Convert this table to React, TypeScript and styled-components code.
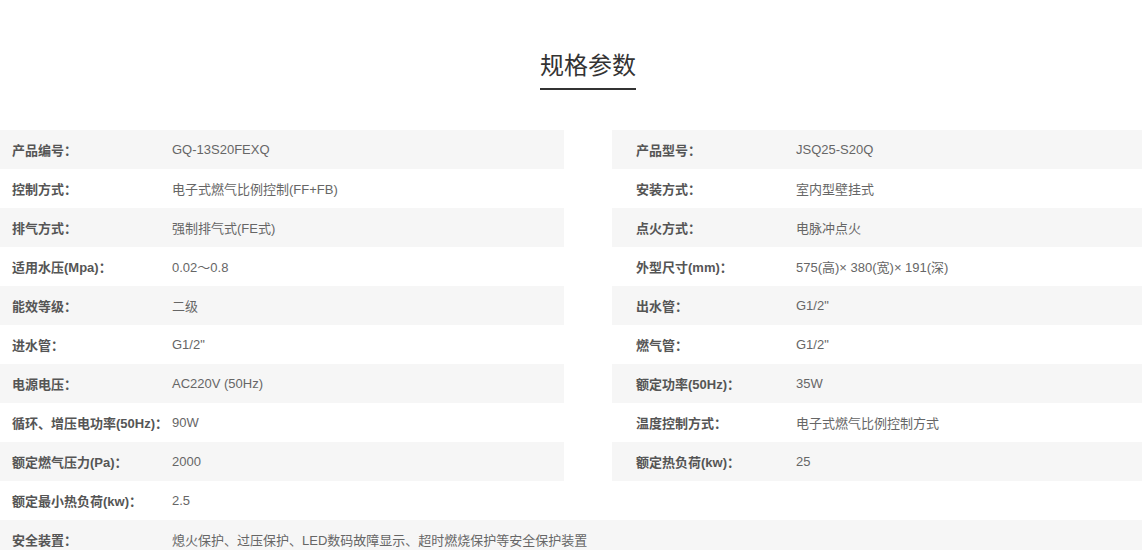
import React from "react";
import styled, { createGlobalStyle } from "styled-components";

const Global = createGlobalStyle`
  html, body { margin: 0; padding: 0; overflow: hidden; background: #fff; }
  body { font-family: "Liberation Sans", "Noto Sans CJK SC", sans-serif; }
`;

const Page = styled.div`
  width: 100%;
  padding-top: 46px;
`;

const TitleWrap = styled.div`
  display: flex;
  justify-content: center;
  padding-left: 34px;
  margin-bottom: 40px;
`;

const Title = styled.h2`
  margin: 0;
  font-family: "Noto Sans CJK SC", sans-serif;
  font-weight: 400;
  font-size: 24px;
  line-height: 36px;
  color: #333;
  padding-bottom: 6px;
  border-bottom: 2px solid #333;
`;

const Columns = styled.div`
  display: flex;
  gap: 48px;
  align-items: flex-start;
`;

const Column = styled.ul<{ $inset: number; $width?: number }>`
  list-style: none;
  margin: 0;
  padding: 0;
  ${(p) => (p.$width ? `width: ${p.$width}px; flex-shrink: 0;` : "flex: 1; min-width: 0;")}
  & > li { padding-left: ${(p) => p.$inset}px; }
`;

const Row = styled.li<{ $shaded: boolean }>`
  display: flex;
  align-items: center;
  height: 39px;
  padding-left: 12px;
  background: ${(p) => (p.$shaded ? "#f6f6f6" : "#fff")};
  font-size: 13px;
  white-space: nowrap;
  overflow: hidden;
`;

const Label = styled.span`
  width: 160px;
  flex-shrink: 0;
  font-weight: 700;
  color: #555;
`;

const Value = styled.span`
  color: #666;
`;

const left: [string, string][] = [
  ["产品编号：", "GQ-13S20FEXQ"],
  ["控制方式：", "电子式燃气比例控制(FF+FB)"],
  ["排气方式：", "强制排气式(FE式)"],
  ["适用水压(Mpa)：", "0.02～0.8"],
  ["能效等级：", "二级"],
  ["进水管：", "G1/2\""],
  ["电源电压：", "AC220V (50Hz)"],
  ["循环、增压电功率(50Hz)：", "90W"],
  ["额定燃气压力(Pa)：", "2000"],
  ["额定最小热负荷(kw)：", "2.5"],
];

const right: [string, string][] = [
  ["产品型号：", "JSQ25-S20Q"],
  ["安装方式：", "室内型壁挂式"],
  ["点火方式：", "电脉冲点火"],
  ["外型尺寸(mm)：", "575(高)× 380(宽)× 191(深)"],
  ["出水管：", "G1/2\""],
  ["燃气管：", "G1/2\""],
  ["额定功率(50Hz)：", "35W"],
  ["温度控制方式：", "电子式燃气比例控制方式"],
  ["额定热负荷(kw)：", "25"],
];

const renderRows = (rows: [string, string][]) =>
  rows.map(([l, v], i) => (
    <Row key={l} $shaded={i % 2 === 0}>
      <Label>{l}</Label>
      <Value>{v}</Value>
    </Row>
  ));

export default function App() {
  return (
    <>
      <Global />
      <Page>
        <TitleWrap>
          <Title>规格参数</Title>
        </TitleWrap>
        <Columns>
          <Column $inset={12} $width={564}>{renderRows(left)}</Column>
          <Column $inset={24}>{renderRows(right)}</Column>
        </Columns>
        <Row as="div" $shaded>
          <Label>安全装置：</Label>
          <Value>熄火保护、过压保护、LED数码故障显示、超时燃烧保护等安全保护装置</Value>
        </Row>
      </Page>
    </>
  );
}
